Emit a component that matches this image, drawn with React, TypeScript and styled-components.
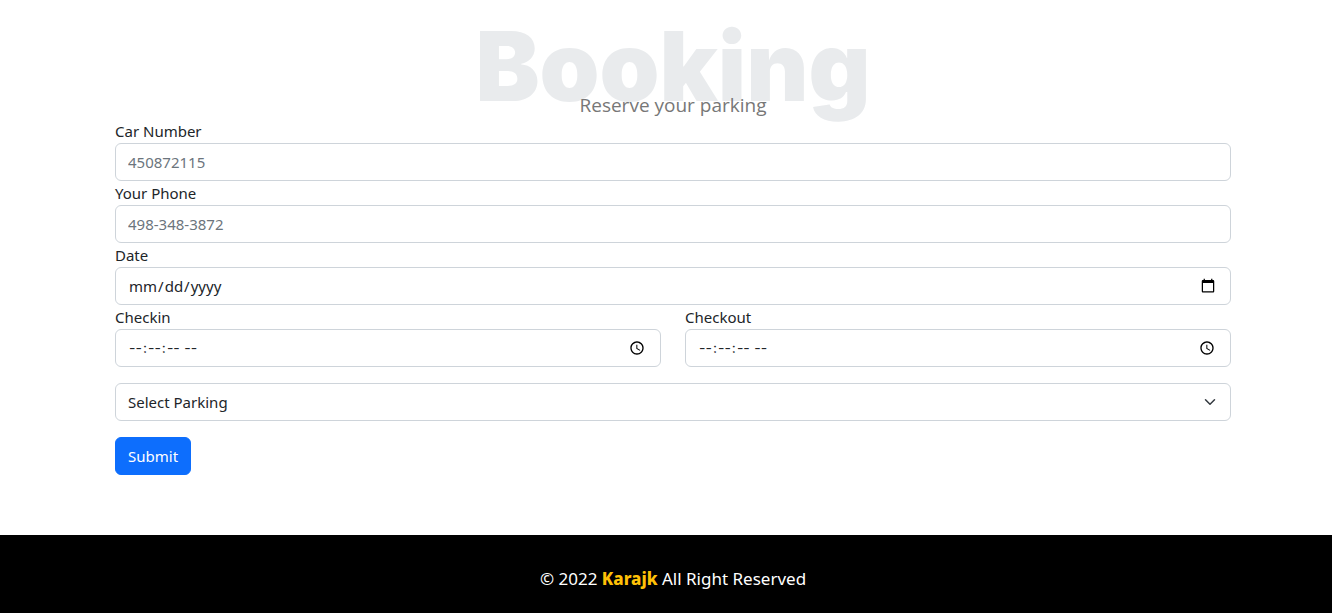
import React from 'react';
import styled, { createGlobalStyle } from 'styled-components';

const GlobalStyle = createGlobalStyle`
  *, *::before, *::after { box-sizing: border-box; }
  body {
    margin: 0;
    background: #fff;
    color: #212529;
    font-family: "Noto Sans", "Open Sans", sans-serif;
    font-size: 15px;
    line-height: 24px;
  }
`;

const Page = styled.div`
  display: flex;
  flex-direction: column;
`;

const Main = styled.main`
  padding: 16px 0 60px 14px;
`;

const Container = styled.div`
  max-width: 1140px;
  margin: 0 auto;
  padding: 0 12px;
`;

const Header = styled.header`
  display: grid;
  justify-items: center;
  align-items: end;
  height: 103px;
`;

const Title = styled.h1`
  grid-area: 1 / 1;
  align-self: start;
  margin: 0;
  color: #e9ebed;
  font-family: Inter, sans-serif;
  font-size: 96px;
  font-weight: 900;
  line-height: 100px;
`;

const Subtitle = styled.p`
  grid-area: 1 / 1;
  position: relative;
  margin: 0;
  color: #777;
  font-family: "Open Sans", sans-serif;
  font-size: 19px;
  line-height: 28px;
`;

const Form = styled.form`
  display: flex;
  flex-direction: column;
`;

const Field = styled.div`
  display: flex;
  flex-direction: column;
`;

const Row = styled.div`
  display: grid;
  grid-template-columns: 1fr 1fr;
  gap: 24px;
`;

const Label = styled.label`
  line-height: 24px;
`;

const Input = styled.input`
  width: 100%;
  height: 38px;
  padding: 6px 12px;
  border: 1px solid #ced4da;
  border-radius: 6px;
  background: #fff;
  color: #212529;
  font: inherit;

  &[type="time"] { font-family: Inter, sans-serif; font-size: 14px; }
  &::placeholder { color: #6c757d; opacity: 1; }
  &::-webkit-datetime-edit { padding: 0; }
  &::-webkit-calendar-picker-indicator { width: 16px; height: 16px; }
`;

const SelectBox = styled.div`
  display: grid;
  align-items: center;
  margin: 16px 0;
`;

const Select = styled.select`
  grid-area: 1 / 1;
  appearance: none;
  width: 100%;
  height: 38px;
  padding: 6px 36px 6px 12px;
  border: 1px solid #ced4da;
  border-radius: 6px;
  background: #fff;
  color: #212529;
  font: inherit;
`;

const Chevron = styled.svg`
  grid-area: 1 / 1;
  justify-self: end;
  width: 16px;
  height: 12px;
  margin-right: 13px;
  pointer-events: none;
`;

const Submit = styled.button`
  align-self: flex-start;
  height: 38px;
  padding: 6px 12px;
  border: 1px solid #0d6efd;
  border-radius: 6px;
  background: #0d6efd;
  color: #fff;
  font: inherit;
  cursor: pointer;
`;

const Footer = styled.footer`
  padding: 30px 0 21px 14px;
  background: #000;
  color: #fff;
  font-size: 17px;
  line-height: 27px;
  text-align: center;
`;

const Brand = styled.strong`
  color: #ffc107;
  font-weight: 800;
`;

interface EntryProps extends React.InputHTMLAttributes<HTMLInputElement> {
  id: string;
  label: string;
}

function Entry({ id, label, ...rest }: EntryProps) {
  return (
    <Field>
      <Label htmlFor={id}>{label}</Label>
      <Input id={id} name={id} {...rest} />
    </Field>
  );
}

export default function App() {
  return (
    <Page>
      <GlobalStyle />
      <Main>
        <Container>
          <Header>
            <Title>Booking</Title>
            <Subtitle>Reserve your parking</Subtitle>
          </Header>
          <Form onSubmit={(e) => e.preventDefault()}>
            <Entry id="car" label="Car Number" type="text" placeholder="450872115" />
            <Entry id="phone" label="Your Phone" type="tel" placeholder="498-348-3872" />
            <Entry id="date" label="Date" type="date" />
            <Row>
              <Entry id="checkin" label="Checkin" type="time" step={1} />
              <Entry id="checkout" label="Checkout" type="time" step={1} />
            </Row>
            <SelectBox>
              <Select name="parking" aria-label="Select Parking" defaultValue="">
                <option value="">Select Parking</option>
              </Select>
              <Chevron viewBox="0 0 16 16" aria-hidden="true">
                <path d="m2 5 6 6 6-6" fill="none" stroke="#343a40" strokeWidth="2" strokeLinecap="round" strokeLinejoin="round" />
              </Chevron>
            </SelectBox>
            <Submit type="submit">Submit</Submit>
          </Form>
        </Container>
      </Main>
      <Footer>
        © 2022 <Brand>Karajk</Brand> All Right Reserved
      </Footer>
    </Page>
  );
}
